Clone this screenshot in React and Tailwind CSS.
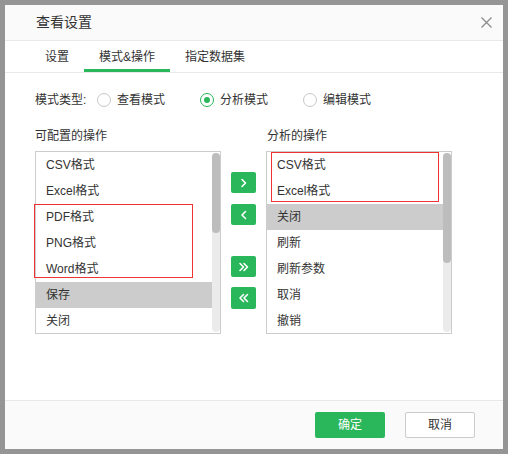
import React, { useState } from 'react';

const leftItems = ['CSV格式', 'Excel格式', 'PDF格式', 'PNG格式', 'Word格式', '保存', '关闭'];
const rightItems = ['CSV格式', 'Excel格式', '关闭', '刷新', '刷新参数', '取消', '撤销'];

const Chevron = ({ dir = 'right', double = false }) => {
  const one = dir === 'right' ? 'M2 1.5 L5.5 5 L2 8.5' : 'M5.5 1.5 L2 5 L5.5 8.5';
  return (
    <svg width={double ? 12 : 8} height="10" viewBox={double ? '0 0 12 10' : '0 0 8 10'} fill="none" stroke="white" strokeWidth="1.6" strokeLinecap="round" strokeLinejoin="round">
      <path d={one} />
      {double && <path d={one} transform="translate(4 0)" />}
    </svg>
  );
};

const Radio = ({ checked, label, onClick }) => (
  <button onClick={onClick} className="flex items-center gap-[6px]">
    <span className={`flex h-[14px] w-[14px] items-center justify-center rounded-full border ${checked ? 'border-[#2ab65b]' : 'border-[#c8c8c8]'}`}>
      {checked && <span className="h-[6px] w-[6px] rounded-full bg-[#2ab65b]" />}
    </span>
    <span>{label}</span>
  </button>
);

const ListBox = ({ items, selected, thumb, redBox }) => (
  <div className="relative flex h-[183px] w-[186px] border border-[#cccccc] bg-white">
    <div className="flex-1 overflow-hidden">
      {items.map((item, i) => (
        <div
          key={i}
          className={`flex h-[26px] items-center pl-[10px] ${i === selected ? 'bg-[#cccccc]' : ''}`}
        >
          {item}
        </div>
      ))}
    </div>
    <div className="w-[8px] py-[1px]">
      <div className="h-full rounded-full bg-[#ebebeb]">
        <div className={`${thumb} rounded-full bg-[#bdbdbd]`} />
      </div>
    </div>
    {redBox}
  </div>
);

export default function App() {
  const [tab, setTab] = useState(1);
  const [mode, setMode] = useState('analyze');

  const tabs = ['设置', '模式&操作', '指定数据集'];

  return (
    <div
      className="h-[454px] w-[508px] bg-[#959595] p-[5px] text-[12px] text-[#333333]"
      style={{ fontFamily: '"Liberation Sans", "Noto Sans CJK SC", sans-serif' }}
    >
      <div className="flex h-full flex-col bg-white">
        {/* header */}
        <div className="flex h-[36px] items-center justify-between border-b border-[#e8e8e8] bg-[#fafafa] pl-[31px] pr-[11px]">
          <span className="text-[14px]">查看设置</span>
          <svg width="11" height="11" viewBox="0 0 11 11" stroke="#8c8c8c" strokeWidth="1.3">
            <path d="M0.5 0.5 L10.5 10.5 M10.5 0.5 L0.5 10.5" />
          </svg>
        </div>

        {/* tabs */}
        <div className="flex h-[32px] border-b border-[#e8e8e8] pl-[25px]">
          {tabs.map((t, i) => (
            <button
              key={t}
              onClick={() => setTab(i)}
              className="relative flex h-full items-center justify-center px-[15px]"
            >
              {t}
              {tab === i && <span className="absolute bottom-[0px] left-0 right-0 h-[3px] bg-[#2ab65b]" />}
            </button>
          ))}
        </div>

        {/* body */}
        <div className="flex-1 pl-[30px] pt-[17px]">
          <div className="flex h-[20px] items-center">
            <span className="w-[62px]">模式类型:</span>
            <div className="flex items-center gap-[35px]">
              <Radio label="查看模式" checked={mode === 'view'} onClick={() => setMode('view')} />
              <Radio label="分析模式" checked={mode === 'analyze'} onClick={() => setMode('analyze')} />
              <Radio label="编辑模式" checked={mode === 'edit'} onClick={() => setMode('edit')} />
            </div>
          </div>

          <div className="mt-[17px] flex h-[18px] items-center">
            <span className="w-[232px]">可配置的操作</span>
            <span>分析的操作</span>
          </div>

          <div className="mt-[6px] flex items-start">
            <ListBox
              items={leftItems}
              selected={5}
              thumb="h-[80px]"
              redBox={<div className="pointer-events-none absolute left-[-2px] top-[52px] h-[74px] w-[159px] border border-[#ee3333]" />}
            />
            <div className="ml-[10px] mr-[10px] flex w-[25px] flex-col pt-[21px]">
              <button className="flex h-[21px] w-[25px] items-center justify-center rounded-[2px] bg-[#2ab65b]">
                <Chevron dir="right" />
              </button>
              <button className="mt-[11px] flex h-[21px] w-[25px] items-center justify-center rounded-[2px] bg-[#2ab65b]">
                <Chevron dir="left" />
              </button>
              <button className="mt-[31px] flex h-[21px] w-[25px] items-center justify-center rounded-[2px] bg-[#2ab65b]">
                <Chevron dir="right" double />
              </button>
              <button className="mt-[10px] flex h-[22px] w-[25px] items-center justify-center rounded-[2px] bg-[#2ab65b]">
                <Chevron dir="left" double />
              </button>
            </div>
            <ListBox
              items={rightItems}
              selected={2}
              thumb="h-[110px]"
              redBox={<div className="pointer-events-none absolute left-[4px] top-0 h-[50px] w-[168px] border border-[#ee3333]" />}
            />
          </div>
        </div>

        {/* footer */}
        <div className="flex h-[49px] items-center justify-end gap-[20px] border-t border-[#e8e8e8] bg-[#fafafa] pr-[28px]">
          <button className="h-[26px] w-[70px] rounded-[2px] bg-[#2ab65b] text-white">确定</button>
          <button className="h-[26px] w-[70px] rounded-[2px] border border-[#cccccc] bg-white">取消</button>
        </div>
      </div>
    </div>
  );
}
